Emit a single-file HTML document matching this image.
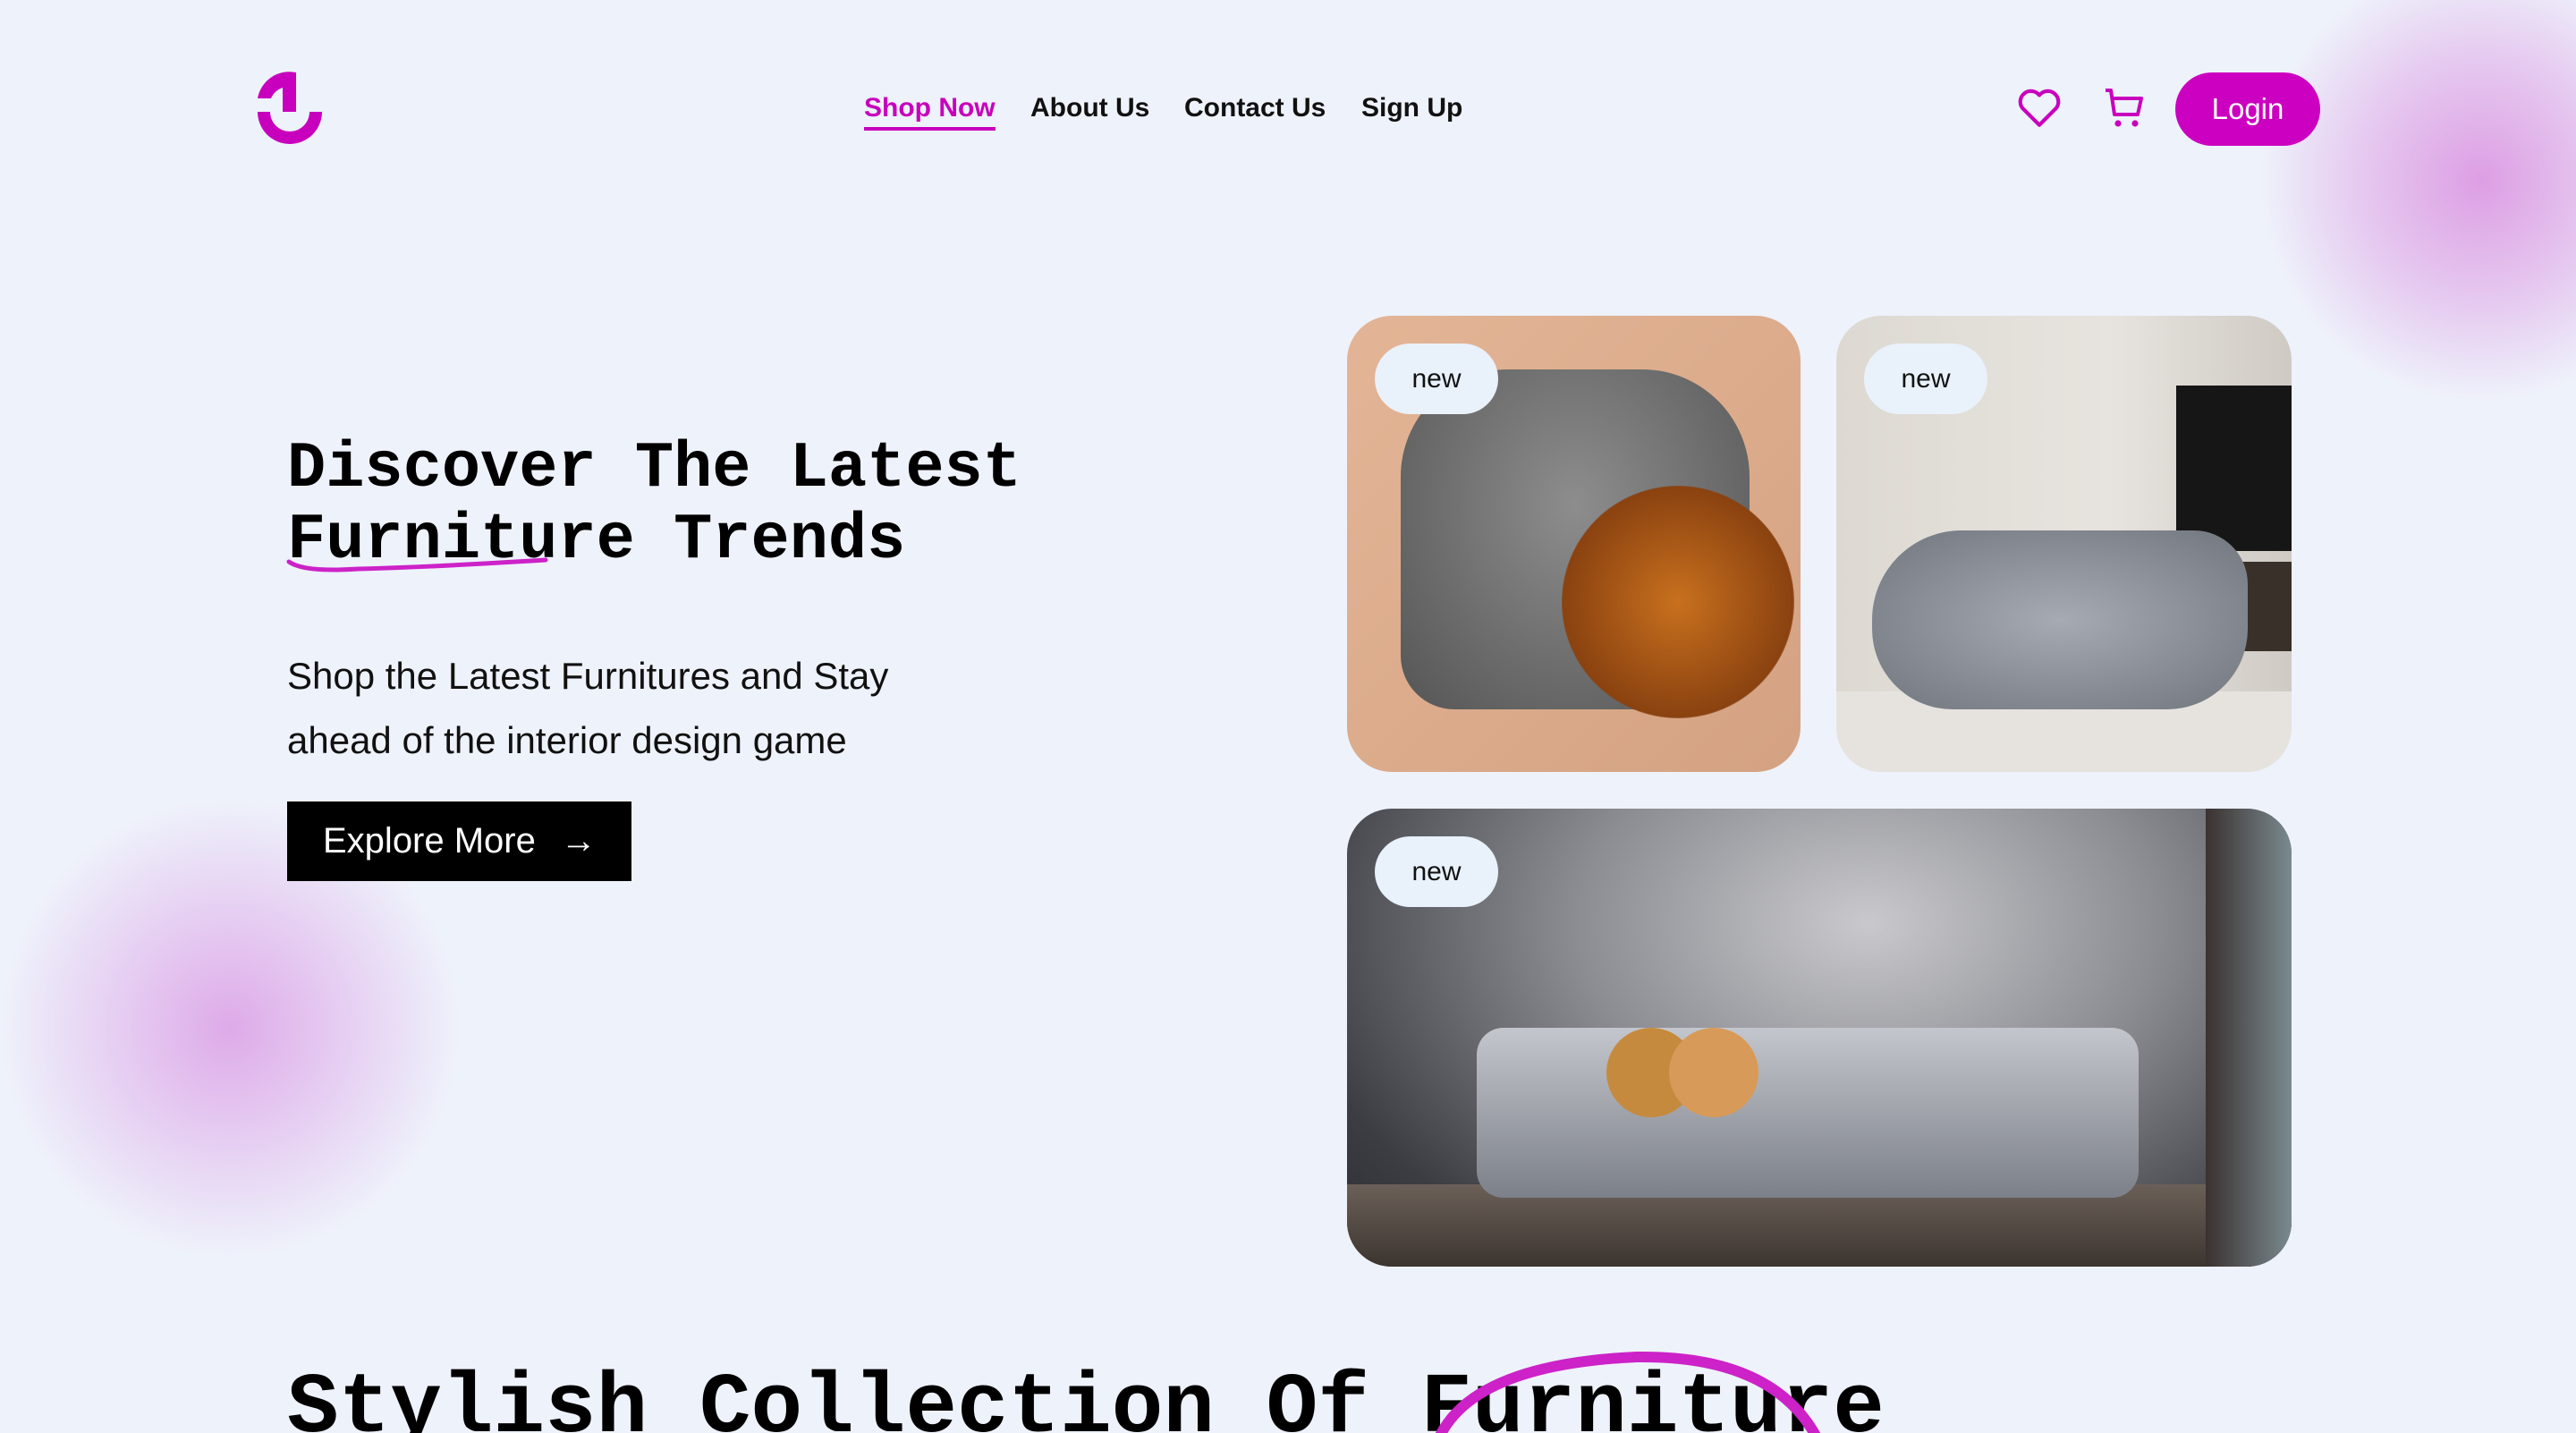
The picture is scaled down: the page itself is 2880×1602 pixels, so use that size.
<!DOCTYPE html>
<html><head><meta charset="utf-8"><style>
*{margin:0;padding:0;box-sizing:border-box}
html,body{width:2880px;height:1602px;overflow:hidden}
body{background:#eef2fb;font-family:"Liberation Sans",sans-serif;position:relative}
.blob{position:absolute;border-radius:50%}
.nav a{position:absolute;top:104px;font-size:30px;font-weight:bold;color:#111;text-decoration:none}
.card{position:absolute;border-radius:50px;overflow:hidden}
.badge{position:absolute;left:31px;top:31px;width:138px;height:79px;border-radius:40px;background:#e9f1fb;font-size:30px;color:#111;display:flex;align-items:center;justify-content:center}
h1{position:absolute;left:321px;font-family:"Liberation Mono",monospace;font-weight:bold;color:#000}
</style></head><body>
<div class="blob" style="left:2524px;top:-48px;width:500px;height:500px;background:radial-gradient(circle,rgba(215,130,220,.75) 0%,rgba(215,130,220,.35) 40%,rgba(238,242,251,0) 70%)"></div>
<div class="blob" style="left:-3px;top:889px;width:520px;height:520px;background:radial-gradient(circle,rgba(215,140,225,.7) 0%,rgba(215,140,225,.3) 40%,rgba(238,242,251,0) 70%)"></div>

<svg style="position:absolute;left:280px;top:75px" width="90" height="90" viewBox="280 75 90 90">
<path d="M288 110 A36 36 0 0 1 331 81 L331 125 L316 125 L316 98 A22 22 0 0 0 303 110 Z" fill="#c800bd"/>
<path d="M288 125 A36 36 0 0 0 360 125 L346 125 A22 22 0 0 1 302 125 Z" fill="#c800bd"/>
</svg>

<div class="nav">
<a style="left:966px;color:#c800bd;border-bottom:4px solid #c800bd;padding-bottom:4px">Shop Now</a>
<a style="left:1152px">About Us</a>
<a style="left:1324px">Contact Us</a>
<a style="left:1522px">Sign Up</a>
</div>
<svg style="position:absolute;left:2255px;top:98px" width="50" height="46" viewBox="0 0 24 22"><path d="M12 20 L3 11 A5 5 0 0 1 12 4 A5 5 0 0 1 21 11 Z" fill="none" stroke="#c800bd" stroke-width="2" stroke-linejoin="round"/></svg>
<svg style="position:absolute;left:2352px;top:98px" width="48" height="48" viewBox="0 0 24 24"><path d="M1 1.5 H4 L6 15 H19 L21 6 H5" fill="none" stroke="#c800bd" stroke-width="2" stroke-linejoin="round"/><circle cx="8" cy="20" r="1.8" fill="#c800bd"/><circle cx="17.5" cy="20" r="1.8" fill="#c800bd"/></svg>
<div style="position:absolute;left:2432px;top:81px;width:162px;height:82px;border-radius:41px;background:#cc00c0;color:#fff;font-size:33px;display:flex;align-items:center;justify-content:center">Login</div>

<h1 style="top:484px;font-size:72px;line-height:80px">Discover The Latest<br>Furniture Trends</h1>
<svg style="position:absolute;left:320px;top:622px" width="300" height="30"><path d="M3 6 Q20 18 80 14 Q160 12 290 4" fill="none" stroke="#cc22c8" stroke-width="5" stroke-linecap="round"/></svg>
<div style="position:absolute;left:321px;top:720px;font-size:42px;line-height:72px;color:#111">Shop the Latest Furnitures and Stay<br>ahead of the interior design game</div>
<div style="position:absolute;left:321px;top:896px;width:385px;height:89px;background:#000;color:#fff;font-size:40px;display:flex;align-items:center;padding-left:40px">Explore More<span style="margin-left:28px;font-size:40px">→</span></div>

<div class="card" style="left:1506px;top:353px;width:507px;height:510px;background:linear-gradient(135deg,#e3b596,#d4a282)">
<div style="position:absolute;left:60px;top:60px;width:390px;height:380px;border-radius:120px 120px 60px 60px;background:radial-gradient(ellipse at 50% 40%,#8d8d8d,#555)"></div>
<div style="position:absolute;left:240px;top:190px;width:260px;height:260px;border-radius:50%;background:radial-gradient(circle,#c8701e,#8a4210 70%,rgba(0,0,0,0) 72%)"></div>
<div class="badge">new</div></div>
<div class="card" style="left:2053px;top:353px;width:509px;height:510px;background:linear-gradient(90deg,#ddd9d2 0%,#e7e3de 60%,#cfcac4 100%)">
<div style="position:absolute;left:380px;top:78px;width:129px;height:185px;background:#161616"></div>
<div style="position:absolute;left:270px;top:275px;width:239px;height:100px;background:#3a302a"></div>
<div style="position:absolute;left:0;top:420px;width:509px;height:90px;background:#e6e3df"></div>
<div style="position:absolute;left:40px;top:240px;width:420px;height:200px;border-radius:100px 60px 90px 90px;background:radial-gradient(ellipse,#a6abb2,#71767e)"></div>
<div class="badge">new</div></div>
<div class="card" style="left:1506px;top:904px;width:1056px;height:512px;background:radial-gradient(ellipse at 55% 25%,#c9c9cd 0%,#8b8c92 40%,#3c3d43 80%,#2b2b30 100%)">
<div style="position:absolute;left:0;top:420px;width:1056px;height:92px;background:linear-gradient(#6b6058,#3c352f)"></div>
<div style="position:absolute;left:145px;top:245px;width:740px;height:190px;border-radius:30px;background:linear-gradient(#c3c6cc,#7c8088)"></div>
<div style="position:absolute;left:290px;top:245px;width:100px;height:100px;border-radius:50%;background:#c68a3e"></div>
<div style="position:absolute;left:360px;top:245px;width:100px;height:100px;border-radius:50%;background:#d89a58"></div>
<div style="position:absolute;left:960px;top:0;width:96px;height:512px;background:linear-gradient(90deg,#3a3230,#7a8a90)"></div>
<div class="badge">new</div></div>

<h1 style="top:1515px;font-size:96px;line-height:120px">Stylish Collection Of Furniture</h1>
<svg style="position:absolute;left:1590px;top:1505px" width="460" height="110"><path d="M20 100 Q60 20 240 12 Q390 10 440 100" fill="none" stroke="#cc22c8" stroke-width="12" stroke-linecap="round"/></svg>
</body></html>
